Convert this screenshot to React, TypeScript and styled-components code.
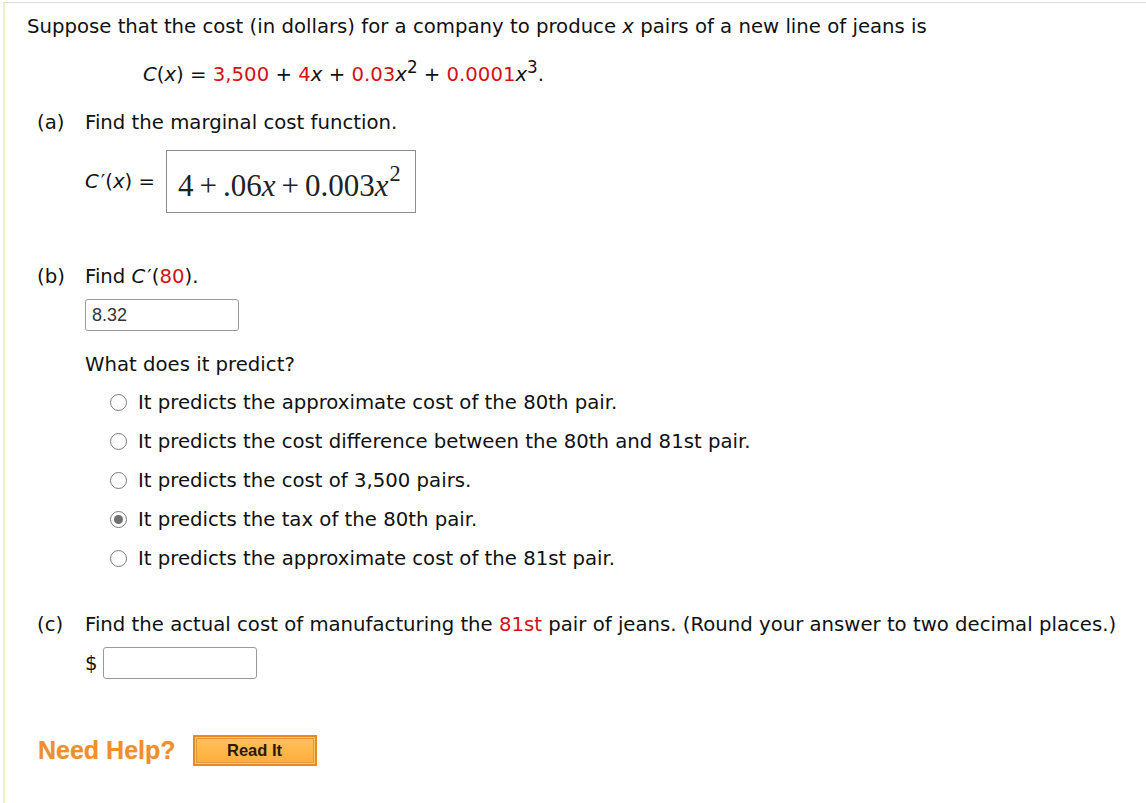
import styled, { createGlobalStyle } from 'styled-components';

const GlobalStyle = createGlobalStyle`
  html, body {
    margin: 0;
    padding: 0;
    background: #ffffff;
  }
  body {
    font-family: 'DejaVu Sans', Verdana, sans-serif;
    color: #111;
  }
`;

const Page = styled.div`
  width: 1146px;
  height: 803px;
  padding: 2px 0 0 3px;
  box-sizing: border-box;
  overflow: hidden;
`;

const Panel = styled.div`
  height: 100%;
  border-top: 1px solid #dedede;
  border-left: 2px solid #f3eec4;
  padding: 12px 0 0 22px;
  box-sizing: border-box;
  font-size: 19.7px;
  line-height: 23px;
`;

const Line = styled.div<{ $mt?: number; $indent?: number }>`
  margin-top: ${(p) => p.$mt ?? 0}px;
  padding-left: ${(p) => p.$indent ?? 0}px;
  white-space: nowrap;
`;

const Red = styled.span`
  color: #d41118;
`;

const Var = styled.i`
  font-style: italic;
`;

const Prime = styled.span`
  margin-left: 2px;
`;

const Sup = styled.sup`
  font-size: 0.85em;
  line-height: 0;
  vertical-align: 0;
  position: relative;
  top: -0.5em;
`;

const Part = styled.div<{ $mt: number }>`
  display: grid;
  grid-template-columns: 48px 1fr;
  margin-top: ${(p) => p.$mt}px;
  padding-left: 10px;
`;

const Label = styled.div`
  white-space: nowrap;
`;

const Body = styled.div`
  display: flex;
  flex-direction: column;
`;

const AnswerRow = styled.div<{ $mt?: number; $gap?: number }>`
  display: flex;
  align-items: center;
  gap: ${(p) => p.$gap ?? 5}px;
  margin-top: ${(p) => p.$mt ?? 0}px;
  white-space: nowrap;
`;

const MathBox = styled.div`
  border: 1px solid #8c8c8c;
  height: 63px;
  width: 250px;
  box-sizing: border-box;
  display: flex;
  align-items: center;
  padding: 8px 0 0 11px;
  font-family: 'Liberation Serif', 'DejaVu Serif', serif;
  font-size: 31px;
  color: #222;
  white-space: nowrap;
`;

const MathOp = styled.span`
  margin: 0 6px;
`;

const MathSup = styled.span`
  font-size: 0.72em;
  position: relative;
  top: -0.55em;
  margin-left: 1px;
`;

const TextInput = styled.div<{ $mt?: number }>`
  width: 154px;
  height: 32px;
  box-sizing: border-box;
  border: 1px solid #9a9a9a;
  border-radius: 3px;
  margin-top: ${(p) => p.$mt ?? 0}px;
  padding-left: 6px;
  display: flex;
  align-items: center;
  font-family: 'Liberation Sans', Arial, sans-serif;
  font-size: 18px;
  color: #333;
`;

const Options = styled.div`
  display: flex;
  flex-direction: column;
  gap: 16px;
  margin-top: 15px;
  padding-left: 25px;
`;

const Option = styled.div`
  display: flex;
  align-items: center;
  gap: 11px;
  white-space: nowrap;
`;

const Radio = styled.span<{ $checked?: boolean }>`
  width: 17px;
  height: 17px;
  border-radius: 50%;
  border: 1.5px solid #7a7a7a;
  box-sizing: border-box;
  flex-shrink: 0;
  display: flex;
  align-items: center;
  justify-content: center;
  background: #fff;
  &::after {
    content: '';
    width: 9px;
    height: 9px;
    border-radius: 50%;
    background: ${(p) => (p.$checked ? '#6f6f6f' : 'transparent')};
  }
`;

const HelpRow = styled.div`
  display: flex;
  align-items: center;
  gap: 17px;
  margin-top: 56px;
  padding-left: 11px;
`;

const NeedHelp = styled.span`
  font-family: 'Liberation Sans', Arial, sans-serif;
  font-weight: bold;
  font-size: 25px;
  color: #ef8f2a;
  text-shadow: 0 0 1px rgba(239, 143, 42, 0.4);
`;

const ReadButton = styled.button`
  width: 124px;
  height: 31px;
  padding: 0;
  border: 2px solid #e98a1c;
  background: linear-gradient(#ffc15c, #ffad3a);
  box-shadow: inset 0 0 0 1px #f7c777, inset 0 0 0 2px #e29a3a;
  font-family: 'Liberation Sans', Arial, sans-serif;
  font-weight: bold;
  font-size: 16.5px;
  color: #2a1a08;
  cursor: pointer;
`;

const options = [
  { text: 'It predicts the approximate cost of the 80th pair.', checked: false },
  { text: 'It predicts the cost difference between the 80th and 81st pair.', checked: false },
  { text: 'It predicts the cost of 3,500 pairs.', checked: false },
  { text: 'It predicts the tax of the 80th pair.', checked: true },
  { text: 'It predicts the approximate cost of the 81st pair.', checked: false },
];

const App = () => {
  return (
    <Page>
      <GlobalStyle />
      <Panel>
        <Line>
          Suppose that the cost (in dollars) for a company to produce <Var>x</Var> pairs of a new line of jeans is
        </Line>
        <Line $mt={25} $indent={116}>
          <Var>C</Var>(<Var>x</Var>) = <Red>3,500</Red> + <Red>4</Red><Var>x</Var> + <Red>0.03</Red>
          <Var>x</Var>
          <Sup>2</Sup> + <Red>0.0001</Red>
          <Var>x</Var>
          <Sup>3</Sup>.
        </Line>

        <Part $mt={25}>
          <Label>(a)</Label>
          <Body>
            <div>Find the marginal cost function.</div>
            <AnswerRow $mt={16} $gap={11}>
              <span>
                <Var>C</Var>
                <Prime>′</Prime>(<Var>x</Var>) =
              </span>
              <MathBox>
                4<MathOp>+</MathOp>.06<Var>x</Var>
                <MathOp>+</MathOp>0.003<Var>x</Var>
                <MathSup>2</MathSup>
              </MathBox>
            </AnswerRow>
          </Body>
        </Part>

        <Part $mt={52}>
          <Label>(b)</Label>
          <Body>
            <div>
              Find <Var>C</Var>
              <Prime>′</Prime>(<Red>80</Red>).
            </div>
            <TextInput $mt={11}>8.32</TextInput>
            <Line $mt={22}>What does it predict?</Line>
            <Options>
              {options.map((o, i) => (
                <Option key={i}>
                  <Radio $checked={o.checked} />
                  <span>{o.text}</span>
                </Option>
              ))}
            </Options>
          </Body>
        </Part>

        <Part $mt={43}>
          <Label>(c)</Label>
          <Body>
            <div>
              Find the actual cost of manufacturing the <Red>81st</Red> pair of jeans. (Round your answer to two
              decimal places.)
            </div>
            <AnswerRow $mt={11}>
              <span>$</span>
              <TextInput />
            </AnswerRow>
          </Body>
        </Part>

        <HelpRow>
          <NeedHelp>Need Help?</NeedHelp>
          <ReadButton>Read It</ReadButton>
        </HelpRow>
      </Panel>
    </Page>
  );
};

export default App;
